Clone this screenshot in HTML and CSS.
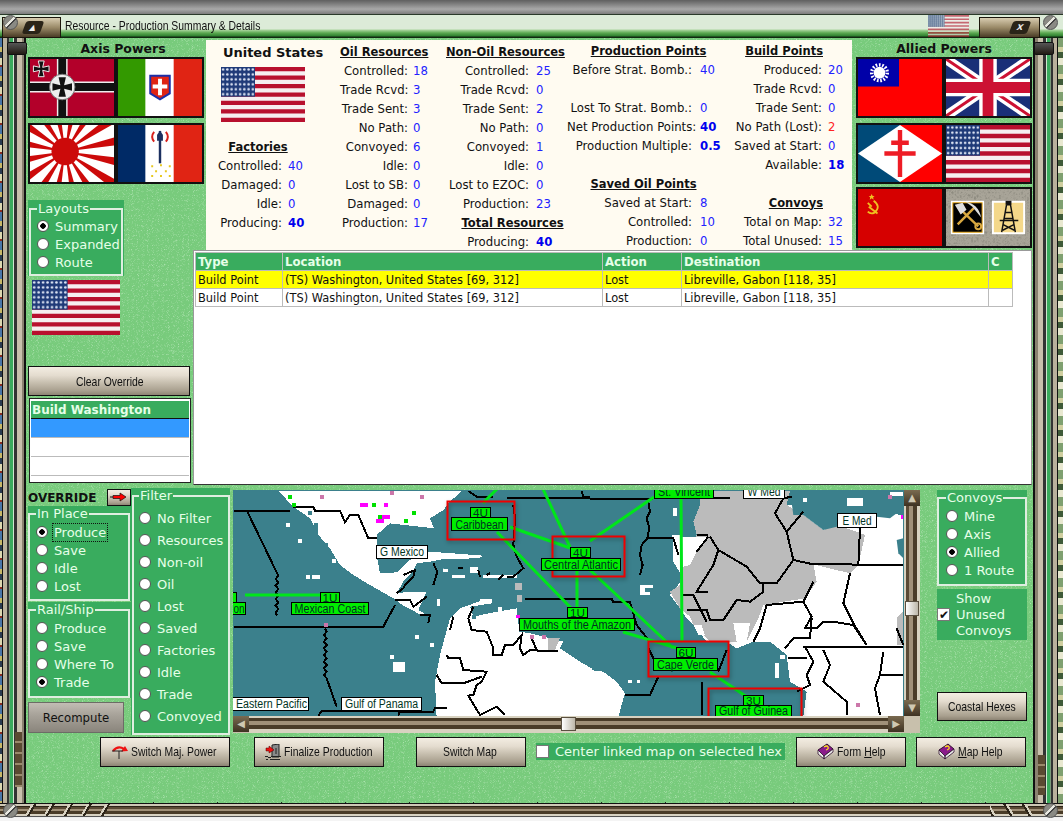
FILE: index.html
```html
<!DOCTYPE html>
<html lang="en">
<head>
    <meta charset="UTF-8">
    <title>Resource - Production Summary &amp; Details</title>
    <link rel="stylesheet" href="styles.css">
</head>
<body>
    <!-- shared flag drawings -->
    <svg class="defs" xmlns="http://www.w3.org/2000/svg">
        <defs>
            <pattern id="stars" width="4.25" height="5.03" patternUnits="userSpaceOnUse">
                <circle cx="2.1" cy="2.5" r="1.25" fill="#dfe6f5"/>
            </pattern>
            <filter id="gravel"><feTurbulence baseFrequency=".35" numOctaves="3"/><feColorMatrix values="0 0 0 0 .25 0 0 0 0 .24 0 0 0 0 .2 0 0 0 1.6 -.35"/></filter>
            <path id="iron" d="M-1.5-1.5-3-8H3L1.5-1.5 8-3V3L1.5 1.5 3 8H-3L-1.5 1.5-8 3V-3Z"/>
            <path id="ray" d="M0 0 90-7V7Z"/>
            <g id="ray2"><use href="#ray"/><use href="#ray" transform="rotate(180)"/></g>
            <g id="ray4"><use href="#ray2"/><use href="#ray2" transform="rotate(90)"/></g>
            <g id="ray8"><use href="#ray4"/><use href="#ray4" transform="rotate(45)"/></g>
        </defs>
        <symbol id="flag-us" viewBox="0 0 84 56" preserveAspectRatio="none">
            <rect width="84" height="56" fill="#f6eef0"/>
            <path d="M42 0V56" stroke="#b8102e" stroke-width="84" stroke-dasharray="4.31 4.31"/>
            <rect width="34" height="30.2" fill="#1f3a78"/>
            <rect width="34" height="30.2" fill="url(#stars)"/>
        </symbol>
        <symbol id="flag-de" viewBox="0 0 86 58" preserveAspectRatio="none">
            <rect width="86" height="58" fill="#b3002a"/>
            <path d="M0 28.5H86M33 0V58" stroke="#eee" stroke-width="11"/>
            <path d="M0 28.5H86M33 0V58" stroke="#111" stroke-width="8"/>
            <circle cx="33" cy="28.5" r="13" fill="#eee" stroke="#777"/>
            <use href="#iron" transform="translate(33 28.5) scale(1.25)" fill="#111"/>
            <rect x="2" y="0" width="19" height="18" fill="#b3002a"/>
            <use href="#iron" transform="translate(11.500 10)" fill="#111" stroke="#eee"/>
        </symbol>
        <symbol id="flag-it" viewBox="0 0 86 58" preserveAspectRatio="none">
            <rect width="86" height="58" fill="#fff"/>
            <rect width="28" height="58" fill="#339900"/>
            <rect x="57" width="29" height="58" fill="#e02414"/>
            <path d="M33 17H53V35L43 41 33 35Z" fill="#e02414" stroke="#1c2fa8" stroke-width="2"/>
            <path d="M43 20V37M35.500 28H50.500" stroke="#fff" stroke-width="4"/>
        </symbol>
        <symbol id="flag-jp" viewBox="0 0 86 58" preserveAspectRatio="none">
            <rect width="86" height="58" fill="#fff"/>
            <g transform="translate(36 27)" fill="#cc0a0a">
                <use href="#ray8" transform="rotate(11)"/>
                <use href="#ray8" transform="rotate(33.500)"/>
                <circle r="14"/>
            </g>
        </symbol>
        <symbol id="flag-vf" viewBox="0 0 86 58" preserveAspectRatio="none">
            <rect width="86" height="58" fill="#fff"/>
            <rect width="28" height="58" fill="#002a66"/>
            <rect x="57" width="29" height="58" fill="#e02414"/>
            <path d="M43 6V39" stroke="#1c3060" stroke-width="2.500"/>
            <path d="M37 7Q33 12 37 17M49 7Q53 12 49 17" stroke="#d8201a" stroke-width="2" fill="none"/>
            <path d="M40 10 43 6 46 10V16H40Z" fill="#1c3060"/>
            <path d="M34 42h2M43 41h2M52 42h2M38 47h2M48 47h2M34 52h2M43 52h2M52 52h2" stroke="#e8c820" stroke-width="2"/>
        </symbol>
        <symbol id="flag-cn" viewBox="0 0 86 58" preserveAspectRatio="none">
            <rect width="86" height="58" fill="#ff0000"/>
            <rect width="42" height="28" fill="#0000a8"/>
            <circle cx="22" cy="14" r="8" fill="none" stroke="#fff" stroke-width="3.500" stroke-dasharray="1.700 1.650"/>
            <circle cx="22" cy="14" r="6" fill="#fff"/>
        </symbol>
        <symbol id="flag-uk" viewBox="0 0 86 58" preserveAspectRatio="none">
            <rect width="86" height="58" fill="#1a2f78"/>
            <path d="M0 0 86 58M86 0 0 58" stroke="#fff" stroke-width="10"/>
            <path d="M0 0 86 58M86 0 0 58" stroke="#cc1133" stroke-width="3"/>
            <path d="M43 0V58M0 29H86" stroke="#fff" stroke-width="18"/>
            <path d="M43 0V58M0 29H86" stroke="#cc1133" stroke-width="11"/>
        </symbol>
        <symbol id="flag-ff" viewBox="0 0 86 58" preserveAspectRatio="none">
            <rect width="43" height="58" fill="#004a78"/>
            <rect x="43" width="43" height="58" fill="#ff0000"/>
            <path d="M0 29 43 0 86 29 43 58Z" fill="#fff"/>
            <path d="M43 5V53M34 18H52M27 29H59" stroke="#ee1c25" stroke-width="4.500"/>
        </symbol>
        <symbol id="flag-su" viewBox="0 0 86 58" preserveAspectRatio="none">
            <rect width="86" height="58" fill="#d60000"/>
            <path d="M14 5 15 7H17L15.500 8.500 16 11 14 9.500 12 11 12.500 8.500 11 7H13Z" fill="#f0c020"/>
            <path d="M16 12Q24 18 17 24 13 26 10 23M11 18 20 25M10 14 14 18" stroke="#f0c020" stroke-width="1.800" fill="none"/>
        </symbol>
        <symbol id="flag-res" viewBox="0 0 86 58" preserveAspectRatio="none">
            <rect width="86" height="58" fill="#a8a498"/>
            <rect width="86" height="58" filter="url(#gravel)"/>
            <rect x="5" y="12" width="34" height="34" fill="#fff"/>
            <rect x="7" y="14" width="30" height="30" fill="#000" stroke="#f0b020"/>
            <path d="M12 36 30 18M14 20 33 38" stroke="#d8a840" stroke-width="2.500"/>
            <path d="M9 16 17 14 21 21 15 26ZM20 13Q33 15 36 29L27 18Z" fill="#ddd"/>
            <circle cx="33" cy="38" r="3" fill="none" stroke="#d8a840" stroke-width="2"/>
            <rect x="47" y="12" width="34" height="34" fill="#fff"/>
            <rect x="49" y="14" width="30" height="30" fill="#f4d88a"/>
            <path d="M62 16H66L71 44M62 16 57 44M59 30H69M55 32H74M60 24H68M58 36 70 42M70 36 58 42" stroke="#111" stroke-width="1.500" fill="none"/>
            <path d="M61 12H67V16H61Z" fill="#111"/>
        </symbol>
    </svg>

    <div class="screen">
        <div class="top-band"></div>

        <header class="titlebar">
            <div class="handle"><span class="handle-btn">&#9650;</span></div>
            <span class="title">Resource - Production Summary &amp; Details</span>
            <svg class="title-flag"><use href="#flag-us"/></svg>
            <div class="handle handle-right"><span class="handle-btn">X</span></div>
        </header>

        <div class="middle">
            <div class="edge"></div>
            <div class="rail"></div>

            <main class="content">
                <div class="upper">
                    <section class="powers axis">
                        <h3 class="powers-title">Axis Powers</h3>
                        <div class="flags">
                            <svg class="flag"><use href="#flag-de"/></svg>
                            <svg class="flag"><use href="#flag-it"/></svg>
                            <svg class="flag"><use href="#flag-jp"/></svg>
                            <svg class="flag"><use href="#flag-vf"/></svg>
                        </div>
                    </section>

                    <section class="summary">
                        <div class="stat-col col-us">
                            <h2 class="country">United States</h2>
                            <svg class="country-flag"><use href="#flag-us"/></svg>
                            <div class="stat-grid factories">
                                <h4 class="stat-head">Factories</h4>
                                <span>Controlled:</span><b>40</b>
                                <span>Damaged:</span><b>0</b>
                                <span>Idle:</span><b>0</b>
                                <span>Producing:</span><b class="strong">40</b>
                            </div>
                        </div>
                        <div class="stat-grid col-oil">
                            <h4 class="stat-head">Oil Resources</h4>
                            <span>Controlled:</span><b>18</b>
                            <span>Trade Rcvd:</span><b>3</b>
                            <span>Trade Sent:</span><b>3</b>
                            <span>No Path:</span><b>0</b>
                            <span>Convoyed:</span><b>6</b>
                            <span>Idle:</span><b>0</b>
                            <span>Lost to SB:</span><b>0</b>
                            <span>Damaged:</span><b>0</b>
                            <span>Production:</span><b>17</b>
                        </div>
                        <div class="stat-grid col-nonoil">
                            <h4 class="stat-head">Non-Oil Resources</h4>
                            <span>Controlled:</span><b>25</b>
                            <span>Trade Rcvd:</span><b>0</b>
                            <span>Trade Sent:</span><b>2</b>
                            <span>No Path:</span><b>0</b>
                            <span>Convoyed:</span><b>1</b>
                            <span>Idle:</span><b>0</b>
                            <span>Lost to EZOC:</span><b>0</b>
                            <span>Production:</span><b>23</b>
                            <h4 class="stat-head head-total">Total Resources</h4>
                            <span>Producing:</span><b class="strong">40</b>
                        </div>
                        <div class="stat-grid col-prod">
                            <h4 class="stat-head">Production Points</h4>
                            <span>Before Strat. Bomb.:</span><b>40</b>
                            <i class="blank"></i>
                            <span>Lost To Strat. Bomb.:</span><b>0</b>
                            <span>Net Production Points:</span><b class="strong">40</b>
                            <span>Production Multiple:</span><b class="strong">0.5</b>
                            <i class="blank"></i>
                            <h4 class="stat-head head-saved">Saved Oil Points</h4>
                            <span>Saved at Start:</span><b>8</b>
                            <span>Controlled:</span><b>10</b>
                            <span>Production:</span><b>0</b>
                        </div>
                        <div class="stat-grid col-build">
                            <h4 class="stat-head">Build Points</h4>
                            <span>Produced:</span><b>20</b>
                            <span>Trade Rcvd:</span><b>0</b>
                            <span>Trade Sent:</span><b>0</b>
                            <span>No Path (Lost):</span><b class="bad">2</b>
                            <span>Saved at Start:</span><b>0</b>
                            <span>Available:</span><b class="strong">18</b>
                            <i class="blank"></i>
                            <h4 class="stat-head">Convoys</h4>
                            <span>Total on Map:</span><b>32</b>
                            <span>Total Unused:</span><b>15</b>
                        </div>
                    </section>

                    <section class="powers allied">
                        <h3 class="powers-title">Allied Powers</h3>
                        <div class="flags">
                            <svg class="flag"><use href="#flag-cn"/></svg>
                            <svg class="flag"><use href="#flag-uk"/></svg>
                            <svg class="flag"><use href="#flag-ff"/></svg>
                            <svg class="flag"><use href="#flag-us"/></svg>
                            <svg class="flag flag-tight"><use href="#flag-su"/></svg>
                            <svg class="flag flag-tight"><use href="#flag-res"/></svg>
                        </div>
                    </section>

                    <aside class="side">
                        <div class="panel layouts">
                            <fieldset>
                                <legend>Layouts</legend>
                                <label class="opt"><input type="radio" name="layout" checked>Summary</label>
                                <label class="opt"><input type="radio" name="layout">Expanded</label>
                                <label class="opt"><input type="radio" name="layout">Route</label>
                            </fieldset>
                        </div>
                        <svg class="side-flag"><use href="#flag-us"/></svg>
                        <button class="btn btn-clear"><span class="label">Clear Override</span></button>
                        <div class="build-list">
                            <div class="build-head">Build Washington</div>
                            <div class="build-row selected"></div>
                            <div class="build-row"></div>
                            <div class="build-row"></div>
                            <div class="build-row"></div>
                        </div>
                    </aside>

                    <section class="orders">
                        <table>
                            <colgroup>
                                <col class="c-type"><col class="c-loc"><col class="c-act"><col class="c-dest"><col class="c-c">
                            </colgroup>
                            <thead>
                                <tr><th>Type</th><th>Location</th><th>Action</th><th>Destination</th><th>C</th></tr>
                            </thead>
                            <tbody>
                                <tr class="hilite"><td>Build Point</td><td>(TS) Washington, United States [69, 312]</td><td>Lost</td><td>Libreville, Gabon [118, 35]</td><td></td></tr>
                                <tr><td>Build Point</td><td>(TS) Washington, United States [69, 312]</td><td>Lost</td><td>Libreville, Gabon [118, 35]</td><td></td></tr>
                            </tbody>
                        </table>
                    </section>
                </div>

                <div class="lower">
                    <div class="controls">
                        <div class="override-row">
                            <strong class="override-label">OVERRIDE</strong>
                            <button class="btn btn-arrow" aria-label="Override">
                                <svg width="18" height="10" viewBox="0 0 18 10"><path d="M0 5H5" stroke="#111"/><path d="M3 3.500H10V1L16 5 10 9V6.500H3Z" fill="#ff0000" stroke="#111" stroke-width=".7"/></svg>
                            </button>
                        </div>
                        <div class="panel">
                            <fieldset class="fs-place">
                                <legend>In Place</legend>
                                <label class="opt"><input type="radio" name="place" checked><span class="focus">Produce</span></label>
                                <label class="opt"><input type="radio" name="place">Save</label>
                                <label class="opt"><input type="radio" name="place">Idle</label>
                                <label class="opt"><input type="radio" name="place">Lost</label>
                            </fieldset>
                        </div>
                        <div class="panel panel-rail">
                            <fieldset class="fs-rail">
                                <legend>Rail/Ship</legend>
                                <label class="opt"><input type="radio" name="rail">Produce</label>
                                <label class="opt"><input type="radio" name="rail">Save</label>
                                <label class="opt"><input type="radio" name="rail">Where To</label>
                                <label class="opt"><input type="radio" name="rail" checked>Trade</label>
                            </fieldset>
                        </div>
                        <button class="btn btn-recompute">Recompute</button>
                    </div>

                    <div class="panel filter">
                        <fieldset>
                            <legend>Filter</legend>
                            <label class="opt"><input type="radio" name="filter">No Filter</label>
                            <label class="opt"><input type="radio" name="filter">Resources</label>
                            <label class="opt"><input type="radio" name="filter">Non-oil</label>
                            <label class="opt"><input type="radio" name="filter">Oil</label>
                            <label class="opt"><input type="radio" name="filter">Lost</label>
                            <label class="opt"><input type="radio" name="filter">Saved</label>
                            <label class="opt"><input type="radio" name="filter">Factories</label>
                            <label class="opt"><input type="radio" name="filter">Idle</label>
                            <label class="opt"><input type="radio" name="filter">Trade</label>
                            <label class="opt"><input type="radio" name="filter">Convoyed</label>
                        </fieldset>
                    </div>

                    <div class="map-wrap">
                        <svg class="map" width="671" height="226" viewBox="0 0 671 226">
                            <rect class="sea" width="671" height="226"/>

                            <!-- west half, traced at 3x -->
                            <g transform="translate(-3 -5) scale(.33333)">
                                <path class="land" d="M145,18H695L660,50 640,75 600,100 612,130 480,115 440,150 440,210 450,265 500,262 540,225 600,200 760,212 745,220 640,222 600,230 560,235 545,265 520,290 500,325 540,320 590,320 565,375 600,395 570,388 520,362 490,340 420,300 370,270 330,240 300,190 265,150 240,100 190,65Z"/>
                                <path class="land" d="M630,510 660,400 690,370 760,345 785,345 785,355 720,365 730,395 800,380 860,370 868,440 900,445 1000,470 990,490 1050,530 1085,550V700H620L615,590Z"/>
                                <path class="land" d="M168,113h12v12h-12zM204,162h12v12h-12zM228,270h12v12h-12zM246,270h24v12h-24zM306,222h12v12h-12zM480,510h12v12h-12zM490,530h36v30h-36zM555,450h12v12h-12zM600,475h12v12h-12zM804,366h12v12h-12zM750,342h36v12h-36zM620,342h10v20h-10zM665,270h40v10h-40zM760,270h100v10h-100zM640,250h15v10h-15zM720,245h25v20h-25z"/>
                                <path class="sea" d="M234,78h12v12h-12zM252,114h12v36h-12zM282,174h12v12h-12zM540,306h12v12h-12zM726,390h12v12h-12zM640,240h40v12h-40z"/>
                                <path class="grey" d="M955,460H990L975,495H955Z"/>
                                <path class="grey" d="M855,295h20v20h-20zM860,330h15v20h-15z"/>
                                <path class="border" d="M12,77H180M190,65H250L255,77H330L345,112 360,90H385L415,160H440"/>
                                <path class="border" d="M52,80 140,262l5,10-8,10 8,10-8,10 8,10-8,10 8,10-8,10 8,10-8,10 8,10-8,10 4,10"/>
                                <path class="border" d="M12,425H460L495,360"/>
                                <path class="border" d="M285,430l5,10-8,10 8,10-8,10 8,10-8,10 8,10-8,10 8,10-8,10 8,10-8,10 8,10-8,10 8,10 30,85"/>
                                <path class="border" d="M265,692 275,678H510L505,692M510,680H610L615,668H650"/>
                                <path class="border" d="M520,270 555,255 550,275 525,300 520,310 500,325M610,235 622,260 610,300M495,345H540L550,365 590,335M570,390H600L595,415M670,395 660,435"/>
                                <path class="border" d="M685,250h15M745,255 750,275M770,270 780,265M805,285 820,270M830,275H850L880,250 860,215 850,180 855,100 850,60"/>
                                <path class="border" d="M730,365 715,400 725,435 770,440 790,490V510H815L825,480H850L875,450 870,490 880,510 900,495H920L905,460M920,497H985"/>
                                <path class="border" d="M650,510 655,520H690L700,555 770,560 755,590 740,600 730,630 715,632 750,690 800,665 825,690M620,570 635,595H700L755,575"/>
                                <path class="border" d="M715,18 740,35H790M1055,18 1060,35H1080M830,40H1080M885,342H1080"/>
                                <path class="dot-pink" d="M270,30h12v12h-12zM480,18h12v12h-12zM570,30h12v12h-12zM900,450h12v12h-12zM936,450h12v12h-12zM282,414h12v12h-12z"/>
                                <path class="dot-mag" d="M390,54h24v12h-24zM462,54h12v12h-12zM456,90h24v12h-24zM438,102h24v12h-24zM858,390h12v10h-12z"/>
                                <path class="dot-green" d="M426,54h12v12h-12zM546,78h12v12h-12zM444,90h12v12h-12zM522,102h12v12h-12zM174,30h12v12h-12zM186,54h12v12h-12z"/>
                            </g>

                            <!-- east half, traced at 3x -->
                            <g transform="translate(357 -5) scale(.33333)">
                                <path class="land" d="M0,555 40,560 80,590 105,625 85,695H0Z"/>
                                <path class="land" d="M250,155H330L400,80 600,60 940,90V695H640L650,620 600,590 590,510 540,470H490L440,490 410,470H350L310,420 290,400 270,370 240,330 280,280 250,230Z"/>
                                <path class="grey" d="M330,18H600L590,60 640,90 700,135 740,120 800,140 825,150 805,240 780,265 670,238 680,290 645,340 520,360 505,400 470,470H360L310,420 300,395 270,370 240,320 270,300 275,240 320,150 310,110 330,60Z"/>
                                <path class="land" d="M250,160 355,155 320,200 300,240 260,250ZM430,415H480L470,470H440ZM310,420H335L345,450H325ZM150,300h40v10h-25v10h15v10h-30z"/>
                                <path class="sea" d="M600,18H940V70L900,100 860,95 810,130 740,125 700,135 640,90H610Z"/>
                                <path class="land" d="M770,40h50v22h-50zM640,40h10v10h-10zM900,20h40v14h-40zM250,70h12v22h-12zM245,150h30v12h-30zM115,585h12v10h-12zM140,585h10v10h-10zM555,535h12v45h-12zM570,510h15v12h-15z"/>
                                <path class="grey" d="M920,400 940,380V480H920Z"/>
                                <path class="sea" d="M920,165 940,160V220L925,205Z"/>
                                <path class="border" d="M0,42H190M370,40H420M500,40H560"/>
                                <path class="border" d="M175,50 180,80 170,100 178,130 172,160 155,180 150,210 158,240 150,270M172,160H250L265,210"/>
                                <path class="border" d="M0,342H65L70,352H120L140,420 175,465M175,490 190,520M410,495 385,560M205,575 180,630H105M335,590V690"/>
                                <path class="border" d="M360,155 385,195 470,245 510,295H560L610,225 590,140 555,85 580,40 605,35M320,150H355M355,155 320,200M385,195 370,240 320,320H355"/>
                                <path class="border" d="M610,225 670,238H780L805,240H940M810,130 805,240M590,140 640,80M780,265 760,355 790,415 830,480"/>
                                <path class="border" d="M520,295V320L480,350 440,345 400,405H360L350,375H290M280,330H310L350,410M670,290 640,350 530,360 510,430 490,470"/>
                                <path class="border" d="M640,350 665,395 645,430H680L700,410H730L790,420 830,480M640,485H940M645,485 670,530 650,570 660,600 620,620M700,495 720,540 700,590 770,650V690"/>
                                <path class="border" d="M880,500 870,570H940M870,570 855,610 870,690M920,430 940,480M585,490 610,460H660L665,400M595,520H650"/>
                                <path class="dot-pink" d="M798,654h12v12h-12zM894,30h12v12h-12z"/>
                                <path class="dot-mag" d="M934,90h6v12h-6z"/>
                            </g>

                            <g transform="translate(-233 -490)">
                                <path class="link" d="M245,595H320M497,489 483,503M510,527 570,548M497,532 572,609M543,489 570,547M590,541 654,497M577,570V607M590,570 673,648M681,497 682,642M623,632 677,648M710,672 747,697"/>

                                <rect class="red-box" x="447.500" y="501.500" width="67" height="38"/>
                                <rect class="red-box" x="552.500" y="536.500" width="72" height="40"/>
                                <rect class="red-box" x="648.500" y="641.500" width="80" height="35"/>
                                <rect class="red-box" x="708.500" y="688.500" width="93" height="29"/>

                                <rect class="tag" x="654.500" y="486.500" width="59" height="12"/><text class="tag-text" x="658" y="496" textLength="52" lengthAdjust="spacingAndGlyphs">St. Vincent</text>
                                <rect class="place" x="743.500" y="486.500" width="41" height="12"/><text class="tag-text" x="747.500" y="496" textLength="33" lengthAdjust="spacingAndGlyphs">W Med</text>
                                <rect class="place" x="837.500" y="513.500" width="39" height="14"/><text class="tag-text" x="842.500" y="524.500" textLength="29" lengthAdjust="spacingAndGlyphs">E Med</text>
                                <rect class="place" x="376.500" y="545.500" width="51" height="13"/><text class="tag-text" x="380" y="556" textLength="44" lengthAdjust="spacingAndGlyphs">G Mexico</text>

                                <rect class="tag" x="470.500" y="507.500" width="20" height="10"/><text class="tag-text tag-small" x="473" y="516.500" textLength="15" lengthAdjust="spacingAndGlyphs">4U</text>
                                <rect class="tag" x="451.500" y="517.500" width="56" height="13"/><text class="tag-text" x="455.500" y="528.500" textLength="48" lengthAdjust="spacingAndGlyphs">Caribbean</text>
                                <rect class="tag" x="570.500" y="547.500" width="20" height="10"/><text class="tag-text tag-small" x="573" y="556.500" textLength="15" lengthAdjust="spacingAndGlyphs">4U</text>
                                <rect class="tag" x="541.500" y="558.500" width="79" height="12"/><text class="tag-text" x="544" y="569" textLength="74" lengthAdjust="spacingAndGlyphs">Central Atlantic</text>
                                <rect class="tag" x="567.500" y="607.500" width="20" height="10"/><text class="tag-text tag-small" x="570" y="616.500" textLength="15" lengthAdjust="spacingAndGlyphs">1U</text>
                                <rect class="tag" x="519.500" y="618.500" width="115" height="12"/><text class="tag-text" x="523" y="629" textLength="108" lengthAdjust="spacingAndGlyphs">Mouths of the Amazon</text>
                                <rect class="tag" x="320.500" y="592.500" width="19" height="10"/><text class="tag-text tag-small" x="322.500" y="601.500" textLength="15" lengthAdjust="spacingAndGlyphs">1U</text>
                                <rect class="tag" x="291.500" y="602.500" width="77" height="12"/><text class="tag-text" x="294.500" y="613" textLength="71" lengthAdjust="spacingAndGlyphs">Mexican Coast</text>
                                <rect class="tag" x="220.500" y="592.500" width="16" height="10"/>
                                <rect class="tag" x="200.500" y="602.500" width="45" height="12"/><text class="tag-text" x="233.500" y="613" textLength="11" lengthAdjust="spacingAndGlyphs">on</text>
                                <rect class="tag" x="676.500" y="647.500" width="19" height="10"/><text class="tag-text tag-small" x="678.500" y="656.500" textLength="15" lengthAdjust="spacingAndGlyphs">6U</text>
                                <rect class="tag" x="653.500" y="658.500" width="64" height="12"/><text class="tag-text" x="657" y="669" textLength="57" lengthAdjust="spacingAndGlyphs">Cape Verde</text>
                                <rect class="tag" x="743.500" y="695.500" width="20" height="10"/><text class="tag-text tag-small" x="746" y="704.500" textLength="15" lengthAdjust="spacingAndGlyphs">3U</text>
                                <rect class="tag" x="715.500" y="705.500" width="76" height="12"/><text class="tag-text" x="719" y="715" textLength="69" lengthAdjust="spacingAndGlyphs">Gulf of Guinea</text>

                                <rect class="place" x="200.500" y="697.500" width="108" height="13"/><text class="tag-text" x="236" y="708" textLength="71" lengthAdjust="spacingAndGlyphs">Eastern Pacific</text>
                                <rect class="place" x="341.500" y="697.500" width="80" height="13"/><text class="tag-text" x="345" y="708" textLength="73" lengthAdjust="spacingAndGlyphs">Gulf of Panama</text>
                            </g>
                        </svg>

                        <div class="scroll-v">
                            <span class="scroll-btn">&#9650;</span>
                            <div class="scroll-track-v"><span class="thumb thumb-v"></span></div>
                            <span class="scroll-btn">&#9660;</span>
                        </div>
                        <div class="scroll-h">
                            <span class="scroll-btn">&#9664;</span>
                            <div class="scroll-track-h"><span class="thumb thumb-h"></span></div>
                            <span class="scroll-btn">&#9654;</span>
                        </div>
                        <div class="scroll-corner"></div>
                    </div>

                    <div class="right-col">
                        <div class="panel">
                            <fieldset class="fs-convoys">
                                <legend>Convoys</legend>
                                <label class="opt"><input type="radio" name="convoys">Mine</label>
                                <label class="opt"><input type="radio" name="convoys">Axis</label>
                                <label class="opt"><input type="radio" name="convoys" checked>Allied</label>
                                <label class="opt"><input type="radio" name="convoys">1 Route</label>
                            </fieldset>
                        </div>
                        <label class="panel show-unused"><input type="checkbox" checked><span>Show<br>Unused<br>Convoys</span></label>
                        <button class="btn btn-coastal"><span class="label">Coastal Hexes</span></button>
                    </div>
                </div>

                <div class="actions">
                    <button class="btn btn-act btn-switch">
                        <svg width="16" height="14" viewBox="0 0 16 14"><path d="M1 6Q6 0 12 4" fill="none" stroke="#ee1111" stroke-width="2.200"/><path d="M9 6.500 16 6 13 1Z" fill="#ee1111"/><path d="M0 6H11M7 6V14" stroke="#222"/></svg>
                        <span class="label">Switch Maj. Power</span>
                    </button>
                    <button class="btn btn-act btn-final">
                        <svg width="16" height="16" viewBox="0 0 16 16"><path d="M7 1 14 0V13H7Z" fill="#8a8a8a" stroke="#222"/><path d="M11 4V10" stroke="#222"/><path d="M1 4H4V2L9 6 4 9V7H1Z" fill="#ee1111" stroke="#400" stroke-width=".5"/><path d="M0 12h3v1H0zM3 13h3v1H3zM6 12h10v1H6zM1 15h2v1H1zM5 15h10v1H5z" fill="#222"/></svg>
                        <span class="label">Finalize Production</span>
                    </button>
                    <button class="btn btn-act btn-map"><span class="label">Switch Map</span></button>
                    <label class="center-check"><input type="checkbox">Center linked map on selected hex</label>
                    <button class="btn btn-act btn-form">
                        <svg width="17" height="17" viewBox="0 0 17 17"><path d="M1 7 10 1 16 6 7 13Z" fill="#8a1a8a" stroke="#301030"/><path d="M1 7V11L7 16V13ZM7 16 16 9V6L7 13Z" fill="#eee" stroke="#301030" stroke-width=".8"/><path d="M7 4Q10 2 11 4T9 7" fill="none" stroke="#ffe020" stroke-width="1.300"/></svg>
                        <span class="label">Form <u>H</u>elp</span>
                    </button>
                    <button class="btn btn-act btn-help">
                        <svg width="17" height="17" viewBox="0 0 17 17"><path d="M1 7 10 1 16 6 7 13Z" fill="#8a1a8a" stroke="#301030"/><path d="M1 7V11L7 16V13ZM7 16 16 9V6L7 13Z" fill="#eee" stroke="#301030" stroke-width=".8"/><path d="M7 4Q10 2 11 4T9 7" fill="none" stroke="#ffe020" stroke-width="1.300"/></svg>
                        <span class="label"><u>M</u>ap Help</span>
                    </button>
                </div>
            </main>

            <div class="rail rail-right"></div>
            <div class="edge edge-right"></div>
        </div>

        <div class="bottom-rail"></div>
        <div class="foot"></div>

        <!-- corner screws sit on top of the frame -->
        <i class="screw screw-tl"></i>
        <i class="screw screw-tr"></i>
        <i class="screw screw-bl"></i>
        <i class="screw screw-br"></i>
    </div>
</body>
</html>
```

FILE: styles.css
```css
* {
    box-sizing: border-box;
}
body {
    margin: 0;
    background-color: #f0f0f0;
    font-family: "DejaVu Sans", Verdana, sans-serif;
    font-size: 11.7px;
    color: #111;
    overflow: hidden;
}
h2, h3, h4 {
    margin: 0;
}
.defs {
    position: absolute;
    width: 0;
    height: 0;
}
.screen {
    position: relative;
    width: 1063px;
    height: 821px;
    display: flex;
    flex-direction: column;
    overflow: hidden;
}
.top-band {
    height: 14px;
    background: linear-gradient(#5f5f5f, #8c8c8c 40%, #a8a8a8 65%, #7c7c7c);
}

/* title bar */
.titlebar {
    height: 24px;
    display: flex;
    align-items: stretch;
    padding-left: 2px;
    background: linear-gradient(#2a3a2a 0 1px, #dcebd8 1px 15px, #a8d49c 16px, #5aa850 19px, #2f8030 22px, #102810 23px);
}
.handle {
    width: 59px;
    margin-top: 3px;
    position: relative;
    background: linear-gradient(#d8ccb0, #9a8a68 50%, #4a3c26);
    border: 1px solid #1c160c;
    display: flex;
    align-items: center;
    justify-content: flex-end;
    padding-right: 18px;
}
.handle-btn {
    width: 18px;
    height: 13px;
    background: #2a2418;
    color: #eee;
    font-size: 8px;
    line-height: 13px;
    text-align: center;
    border-radius: 3px;
    transform: skewX(-20deg);
}
.handle-right {
    width: 61px;
    margin-left: 10px;
    margin-right: 23px;
    padding-right: 10px;
    font-weight: bold;
}
.title {
    margin-left: 4px;
    font-family: "Liberation Sans", sans-serif;
    font-size: 13px;
    line-height: 23px;
    flex: 1;
    white-space: nowrap;
    transform: scaleX(.8);
    transform-origin: left;
}
.title-flag {
    width: 41px;
    height: 22px;
    opacity: .6;
    margin-top: 1px;
}

/* frame */
.middle {
    height: 765px;
    display: flex;
}
.edge {
    width: 2px;
    background: repeating-linear-gradient(#4a76a8 0 9px, #c8b868 9px 14px, #2a3a50 14px 20px, #dcd8b0 20px 27px, #8a2a20 27px 29px);
}
.edge-right {
    width: 5px;
    background: repeating-linear-gradient(#7fa070 0 9px, #d0cfa0 9px 14px, #3e5a38 14px 20px, #e8e8d0 20px 27px);
}
.rail {
    width: 24px;
    background: linear-gradient(90deg, #111 0 1px, #b9b09c 1px 5px, #333 5px 7px, #7a9a7a 7px 8px, #3aaa5c 8px 11px, #cfe8cf 11px 12px, #333 12px 15px, #c8c0ac 15px 20px, #8a8270 20px 22px, #111 22px 24px);
    position: relative;
}
.rail::before {
    content: "";
    position: absolute;
    left: 5px;
    top: 4px;
    width: 18px;
    height: 11px;
    background: linear-gradient(#555, #221c14);
    border: 1px solid #111;
    border-radius: 2px;
}
.rail::after {
    content: "";
    position: absolute;
    left: 13px;
    bottom: 16px;
    width: 7px;
    height: 55px;
    background: repeating-linear-gradient(#5a4a32 0 9px, #9a8a6c 9px 11px);
}
.rail-right {
    width: 25px;
    background: linear-gradient(270deg, #111 0 1px, #b9b09c 1px 5px, #333 5px 7px, #7a9a7a 7px 8px, #3aaa5c 8px 11px, #cfe8cf 11px 12px, #333 12px 15px, #c8c0ac 15px 20px, #8a8270 20px 23px, #111 23px 25px);
}
.rail-right::before {
    left: 1px;
}
.rail-right::after {
    left: 5px;
    bottom: 8px;
    height: 40px;
}
.bottom-rail {
    height: 15px;
    position: relative;
    background: linear-gradient(#111 0 1px, #cfc8b6 1px 3px, #2c2418 3px 4px, #5a4a35 4px 6px, #a09078 6px 8px, #4a3c28 8px 11px, #d8d2c2 11px 13px, #555 13px 14px, #eee 14px);
}
.bottom-rail::before, .bottom-rail::after {
    content: "";
    position: absolute;
    top: 1px;
    height: 12px;
    background: repeating-linear-gradient(120deg, transparent 0 5px, #d8d2c2 5px 7px, #2c2418 7px 9px, transparent 9px 16px);
}
.bottom-rail::before {
    left: 26px;
    width: 90px;
}
.bottom-rail::after {
    left: 990px;
    width: 42px;
    transform: scaleX(-1);
}
.foot {
    height: 3px;
    background-color: #f4f4f4;
}
.screw {
    position: absolute;
    width: 15px;
    height: 15px;
    border-radius: 50%;
    background: linear-gradient(135deg, #8a8a84 0 42%, #e8e8e0 42% 50%, #444 50% 58%, #8a8a84 58%);
    border: 1px solid #555;
}
.screw-tl { left: 3px; top: 15px; }
.screw-tr { left: 1043px; top: 15px; }
.screw-bl { left: 3px; top: 803px; }
.screw-br { left: 1043px; top: 803px; }

/* main green area */
.content {
    width: 1007px;
    padding: 2px 1px 0 2px;
    display: flex;
    flex-direction: column;
    background-color: #78cb7c;
    background-image: repeating-linear-gradient(90deg, #222 0 1px, transparent 1px 64px), url("data:image/svg+xml,%3Csvg xmlns='http://www.w3.org/2000/svg' width='256' height='256'%3E%3Cfilter id='n'%3E%3CfeTurbulence baseFrequency='.8' numOctaves='2'/%3E%3CfeColorMatrix values='0 0 0 0 .85 0 0 0 0 1 0 0 0 0 .85 0 0 0 .9 -.25'/%3E%3C/filter%3E%3Crect width='256' height='256' filter='url(%23n)'/%3E%3C/svg%3E");
    background-size: 100% 1px, auto;
    background-position: 63px 100%, 0 0;
    background-repeat: no-repeat, repeat;
}
.upper {
    display: grid;
    grid-template-columns: 165px 13px 646px 180px;
    grid-template-rows: 160px 50px 235px;
}
.powers-title {
    text-align: center;
    font-size: 12.5px;
    line-height: 17px;
}
.axis {
    grid-column: 1 / 3;
    grid-row: 1;
}
.axis .powers-title {
    padding-left: 12px;
}
.allied {
    grid-column: 4;
    grid-row: 1 / 3;
    padding-left: 4px;
}
.flags {
    display: grid;
    grid-template-columns: 88px 88px;
    grid-auto-rows: 60px;
    row-gap: 6px;
}
.flag {
    width: 88px;
    height: 61px;
    border: 1px solid #111;
    padding: 1px;
    background-color: #111;
    display: block;
}
.flag-tight {
    margin-top: -2px;
}

/* summary figures */
.summary {
    grid-column: 3;
    grid-row: 1 / 3;
    background-color: #fffbf1;
    position: relative;
    display: flex;
}
.country {
    font-size: 13px;
    line-height: 17px;
    text-align: center;
    margin-top: 4px;
    white-space: nowrap;
}
.country-flag {
    display: block;
    width: 84px;
    height: 55px;
    margin: 6px 0 0 15px;
}
.col-us {
    width: 134px;
}
.stat-grid {
    display: grid;
    column-gap: 6px;
    grid-auto-rows: 19px;
    align-items: center;
    white-space: nowrap;
}
.stat-grid span {
    text-align: right;
}
.stat-grid b {
    color: #2222ff;
    font-weight: normal;
}
.stat-grid b.strong {
    color: #0000ee;
    font-weight: bold;
}
.stat-grid b.bad {
    color: #ff2222;
}
.blank {
    grid-column: 1 / -1;
}
.stat-head {
    grid-column: 1 / -1;
    font-size: 11.5px;
    font-weight: bold;
    text-decoration: underline;
}
.factories {
    grid-template-columns: 70px 1fr;
    margin: 15px 0 0 6px;
}
.factories .stat-head {
    text-align: center;
    padding-right: 36px;
}
.col-oil {
    width: 106px;
    grid-template-columns: 68px 1fr;
    column-gap: 5px;
    margin-top: 2px;
}
.col-nonoil {
    width: 121px;
    grid-template-columns: 83px 1fr;
    column-gap: 7px;
    margin-top: 2px;
}
.col-nonoil .head-total {
    text-align: center;
    padding-left: 12px;
}
.col-prod {
    width: 163px;
    grid-template-columns: 125px 1fr;
    column-gap: 8px;
    margin-top: 1px;
}
.col-prod .stat-head {
    text-align: center;
}
.col-prod .head-saved {
    padding-right: 10px;
}
.col-build {
    width: 122px;
    grid-template-columns: 92px 1fr;
    margin-top: 1px;
}
.col-build .stat-head {
    text-align: right;
    width: 93px;
}

/* left column under the axis flags */
.side {
    grid-column: 1;
    grid-row: 2 / 4;
    display: flex;
    flex-direction: column;
    align-items: flex-start;
}
.panel {
    background-color: #39ac5e;
    color: #e6ffe8;
}
.panel fieldset {
    margin: 0;
    min-width: 0;
    border: 2px solid #dfeee0;
    padding: 2px 0 3px 6px;
}
legend {
    padding: 0 1px;
    font-size: 13px;
    line-height: 15px;
}
.opt {
    display: flex;
    align-items: center;
    gap: 6px;
    height: 18px;
    font-size: 13px;
    white-space: nowrap;
}
input[type="radio"] {
    appearance: none;
    width: 12px;
    height: 12px;
    margin: 0;
    border-radius: 50%;
    border: 1px solid #555;
    background: #fff;
    flex: none;
}
input[type="radio"]:checked {
    background: radial-gradient(#000 0 2.500px, #fff 3px);
}
input[type="checkbox"] {
    appearance: none;
    width: 13px;
    height: 13px;
    margin: 0;
    flex: none;
    border: 1px solid #777;
    background: #fff;
    display: grid;
    place-content: center;
}
input[type="checkbox"]:checked::before {
    content: "\2714";
    color: #111;
    font-size: 12px;
    line-height: 12px;
}
.focus {
    outline: 1px dotted #111;
    padding: 1px;
    margin-left: -1px;
}
.layouts {
    width: 96px;
    height: 76px;
    padding: 1px 1px 0;
}
.layouts fieldset {
    padding-top: 1px;
}
.side-flag {
    width: 88px;
    height: 55px;
    margin: 4px 0 0 4px;
}
.btn {
    font-family: "Liberation Sans", sans-serif;
    font-size: 13px;
    color: #111;
    border: 1px solid #111;
    padding: 0;
    display: flex;
    align-items: center;
    justify-content: center;
    gap: 3px;
    background: linear-gradient(#f3ede2, #e4dccf 30%, #c8c0b0 55%, #a89f8e 85%, #8d8474);
}
/* no narrow font is installed, so squeeze the labels to their width */
.label {
    flex: none;
    white-space: nowrap;
    transform: scaleX(.8);
    transform-origin: left;
    width: 67px;
}
.btn-clear {
    width: 162px;
    height: 30px;
    margin-top: 31px;
}
.build-list {
    width: 162px;
    height: 85px;
    margin: 2px 0 0 1px;
    background: #fff;
    border: 1px solid #222;
    padding: 2px 1px;
    overflow: hidden;
}
.build-head {
    height: 18px;
    background-color: #39ac5e;
    color: #e6ffe8;
    font-weight: bold;
    font-size: 12px;
    line-height: 18px;
    padding-left: 1px;
    border-bottom: 1px solid #111;
}
.build-row {
    height: 19px;
    border-bottom: 1px solid #bbb;
}
.build-row.selected {
    background-color: #3399ff;
}

/* order table */
.orders {
    grid-column: 2 / 5;
    grid-row: 3;
    background-color: #fff;
    border: 1px solid #999;
    border-bottom: 1px solid #333;
    padding: 1px;
}
table {
    table-layout: fixed;
    border-collapse: collapse;
    width: 817px;
}
.c-type { width: 87px; }
.c-loc { width: 320px; }
.c-act { width: 79px; }
.c-dest { width: 307px; }
.c-c { width: 24px; }
th, td {
    height: 18px;
    padding: 0 0 0 2px;
    border: 1px solid #bbb;
    text-align: left;
    white-space: nowrap;
    font-weight: normal;
}
td {
    font-size: 11.4px;
}
th {
    background-color: #39ac5e;
    color: #e6ffe8;
    font-weight: bold;
}
.hilite td {
    background-color: #ffff00;
}

/* lower half */
.lower {
    display: flex;
    height: 247px;
    margin-top: 3px;
}
.controls {
    width: 103px;
}
.override-row {
    height: 18px;
    display: flex;
    justify-content: space-between;
    align-items: center;
}
.override-label {
    font-size: 12px;
    line-height: 16px;
    margin-top: 2px;
}
.btn-arrow {
    width: 24px;
    height: 17px;
}
.fs-place, .fs-rail {
    width: 102px;
}
.fs-place {
    height: 95px;
}
.panel-rail {
    margin-top: 1px;
}
.fs-rail {
    height: 96px;
}
.btn-recompute {
    width: 96px;
    height: 31px;
    margin-top: 4px;
    border-color: #6c6c66;
    font-family: "DejaVu Sans", Verdana, sans-serif;
    font-size: 11.7px;
    background: linear-gradient(#c2bdb4, #a8a39a 40%, #8a857c);
}
.filter {
    width: 99px;
    height: 247px;
}
.panel.filter fieldset {
    height: 247px;
    padding: 4px 0 0 5px;
    margin-left: 1px;
    width: 98px;
}
.filter .opt {
    height: 22px;
}
.map-wrap {
    width: 687px;
    height: 243px;
    margin: 2px 0 0 3px;
    display: grid;
    grid-template-columns: 671px 16px;
    grid-template-rows: 226px 17px;
}
.map {
    display: block;
}
.sea { fill: #3b808c; }
.land { fill: #fff; shape-rendering: crispEdges; }
.grey { fill: #bbb; shape-rendering: crispEdges; }
.border {
    fill: none;
    stroke: #000;
    stroke-width: 6;
    shape-rendering: crispEdges;
}
.dot-pink { fill: #cc77aa; shape-rendering: crispEdges; }
.dot-mag { fill: #ff00ff; shape-rendering: crispEdges; }
.dot-green { fill: #00e000; shape-rendering: crispEdges; }
.link {
    fill: none;
    stroke: #00e61a;
    stroke-width: 3;
}
.red-box {
    fill: none;
    stroke: #f00000;
    stroke-width: 2;
    filter: drop-shadow(1px 2px 2px rgba(0, 0, 0, .35));
}
.tag { fill: #00ee00; stroke: #000; }
.place { fill: #fff; stroke: #000; }
.tag-text {
    font-family: "Liberation Sans", sans-serif;
    font-size: 12.5px;
    fill: #032;
}
.tag-small {
    font-size: 11px;
}
.scroll-v {
    display: flex;
    flex-direction: column;
    background: #c8c0ac;
}
.scroll-h {
    display: flex;
    background: #c8c0ac;
}
.scroll-btn {
    flex: none;
    width: 16px;
    height: 16px;
    background: linear-gradient(#7a6a50, #3e3222);
    color: #cfc8b2;
    font-size: 10px;
    line-height: 16px;
    text-align: center;
}
.scroll-track-v {
    flex: 1;
    position: relative;
    background: linear-gradient(90deg, #d8d2c0 0 2px, #5a4a35 2px 5px, #a09078 5px 9px, #4a3c28 9px 13px, #d8d2c0 13px);
}
.scroll-track-h {
    flex: 1;
    position: relative;
    background: linear-gradient(#d8d2c0 0 2px, #4a3c28 2px 5px, #a09078 5px 9px, #4a3c28 9px 13px, #d8d2c0 13px);
}
.thumb {
    position: absolute;
    background: linear-gradient(90deg, #fff, #bcb6a8);
    border: 1px solid #5a5040;
}
.thumb-v {
    left: 1px;
    top: 95px;
    width: 14px;
    height: 15px;
}
.thumb-h {
    left: 312px;
    top: 1px;
    width: 15px;
    height: 14px;
}
.scroll-corner {
    background-color: #c8c0ac;
}
.right-col {
    width: 90px;
    margin: 2px 0 0 17px;
    display: flex;
    flex-direction: column;
}
.panel .fs-convoys {
    height: 96px;
    padding-left: 7px;
}
.show-unused {
    height: 51px;
    margin-top: 3px;
    display: flex;
    align-items: center;
    gap: 6px;
    font-size: 13px;
    line-height: 16px;
}
.btn-coastal {
    height: 29px;
    margin-top: 52px;
}
.btn-coastal .label { width: 68px; }

/* button row */
.actions {
    display: flex;
    align-items: center;
    height: 31px;
    margin-top: 1px;
    padding-left: 72px;
}
.btn-act {
    height: 30px;
    flex: none;
}
.btn-switch { width: 130px; }
.btn-switch .label { width: 88px; }
.btn-final { width: 130px; margin-left: 24px; }
.btn-final .label { width: 89px; }
.btn-map { width: 110px; margin-left: 32px; }
.btn-map .label { width: 56px; }
.btn-form { width: 110px; margin-left: 11px; }
.btn-form .label { width: 48px; }
.btn-help { width: 110px; margin-left: 10px; }
.btn-help .label { width: 46px; }
.center-check {
    width: 249px;
    height: 17px;
    margin-left: 10px;
    display: flex;
    align-items: center;
    gap: 6px;
    background-color: #39ac5e;
    color: #e6ffe8;
    font-size: 13px;
    white-space: nowrap;
}
```
